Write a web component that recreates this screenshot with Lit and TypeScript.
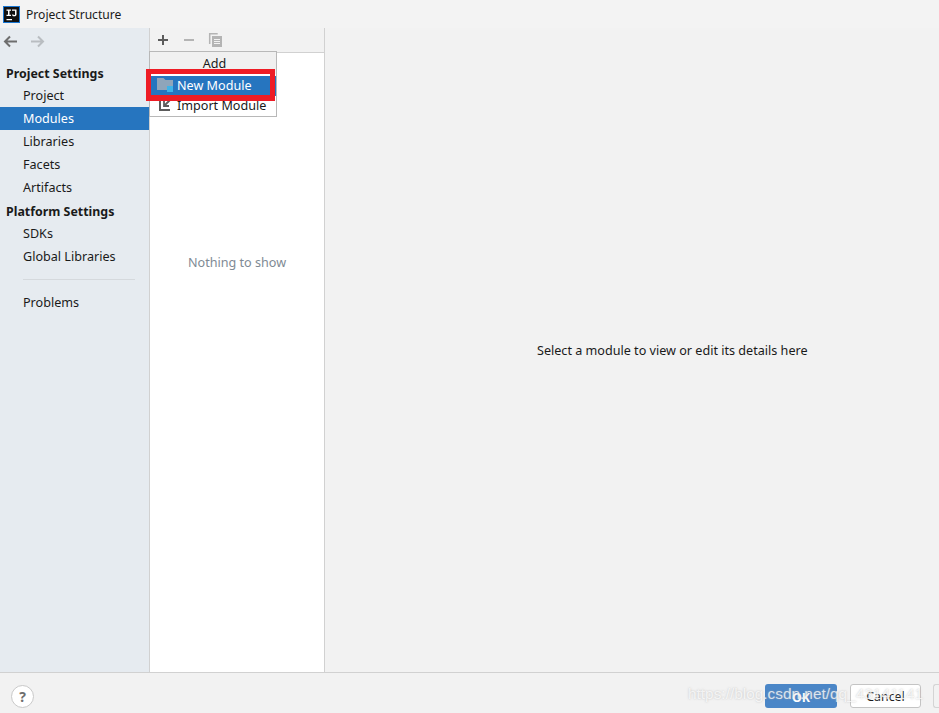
import { LitElement, html, css } from "lit";
import { customElement } from "lit/decorators.js";

@customElement("app-root")
export class AppRoot extends LitElement {
  static styles = css`
    :host {
      display: flex;
      flex-direction: column;
      position: relative;
      width: 939px;
      height: 713px;
      overflow: hidden;
      background: #f2f2f2;
      color: #1a1a1a;
      font-family: "Noto Sans", "Open Sans", sans-serif;
      font-size: 12.6px;
    }
    .title {
      height: 28px;
      flex: none;
      display: flex;
      align-items: center;
      gap: 6px;
      padding-left: 3px;
      background: #f3f3f3;
      font-size: 12.1px;
    }
    .logo { width: 17px; height: 17px; display: block; }
    .main { flex: 1; display: flex; min-height: 0; }
    .side {
      width: 149px;
      flex: none;
      background: #e6ebf0;
      display: flex;
      flex-direction: column;
    }
    .nav-arrows {
      height: 27px;
      display: flex;
      align-items: center;
      gap: 10px;
      padding-left: 2px;
    }
    .nav-arrows svg { width: 17px; height: 17px; display: block; }
    .group { height: 23px; line-height: 25px; padding-left: 6px; font-weight: 700; font-size: 12.4px; }
    .first { margin-top: 6px; }
    .item { height: 23px; line-height: 23px; padding-left: 23px; }
    .item.sel { background: #2675bf; color: #fff; }
    .sep { height: 1px; background: #d5d9dd; margin: 11px 14px 11px 23px; }
    .mid {
      width: 176px;
      flex: none;
      box-sizing: border-box;
      border-left: 1px solid #d1d1d1;
      border-right: 1px solid #d1d1d1;
      display: flex;
      flex-direction: column;
    }
    .tools {
      height: 25px;
      flex: none;
      box-sizing: border-box;
      display: flex;
      align-items: center;
      gap: 10px;
      padding-left: 5px;
      border-bottom: 1px solid #d1d1d1;
    }
    .tools svg { width: 16px; height: 16px; display: block; }
    .list {
      flex: 1;
      background: #fff;
      display: flex;
      justify-content: center;
      padding-top: 201px;
      color: #808a94;
    }
    .detail {
      flex: 1;
      box-sizing: border-box;
      padding: 314px 0 0 212px;
    }
    .foot {
      height: 41px;
      flex: none;
      box-sizing: border-box;
      border-top: 1px solid #d1d1d1;
      display: flex;
      align-items: center;
      padding: 6px 0 0 11px;
    }
    .help {
      width: 23px;
      height: 23px;
      box-sizing: border-box;
      border-radius: 50%;
      border: 1px solid #c9c9c9;
      background: #fff;
      color: #6e6e6e;
      font-weight: 700;
      font-size: 14px;
      display: flex;
      align-items: center;
      justify-content: center;
    }
    .spacer { flex: 1; }
    .btn {
      height: 24px;
      box-sizing: border-box;
      border-radius: 3px;
      display: flex;
      align-items: center;
      justify-content: center;
      font-size: 12.4px;
    }
    .ok { width: 72px; background: #4a86c7; color: #fff; font-weight: 700; margin-right: 13px; padding-top: 2px; }
    .cancel { width: 71px; background: #fff; border: 1px solid #c4c4c4; margin-right: 12px; }
    .stub { width: 6px; border: 1px solid #d4d4d4; border-right: none; border-radius: 3px 0 0 3px; background: #f2f2f2; }
    .popup {
      position: absolute;
      left: 149px;
      top: 51px;
      width: 128px;
      height: 66px;
      box-sizing: border-box;
      border: 1px solid #b8b8b8;
      background: #fff;
      z-index: 2;
    }
    .popup-head { height: 22px; line-height: 23px; text-align: center; background: #f0f0f0; padding-left: 3px; }
    .row { display: flex; align-items: center; gap: 4px; padding-left: 7px; box-sizing: border-box; padding-bottom: 2px; }
    .row svg { width: 16px; height: 16px; display: block; flex: none; }
    .row.on { background: #2675bf; color: #fff; margin-top: 2px; height: 20px; }
    .row.off { height: 20px; }
    .frame {
      position: absolute;
      left: 146px;
      top: 69px;
      width: 129px;
      height: 32px;
      box-sizing: border-box;
      border: 5px solid #ee1c25;
      border-bottom-width: 6px;
      z-index: 3;
    }
    .mark {
      position: absolute;
      left: 688px;
      top: 685px;
      font-family: "Liberation Sans", sans-serif;
      font-size: 15.4px;
      color: rgba(255, 255, 255, 0.75);
      white-space: nowrap;
      text-shadow: 0 0 2px rgba(170, 170, 170, 0.7);
      z-index: 4;
    }
  `;

  render() {
    return html`
      <div class="title">
        <svg class="logo" viewBox="0 0 17 17">
          <rect x="0.5" y="0.5" width="16" height="16" fill="#111" stroke="#1976d2" />
          <path d="M3.500 3.500h4.500v1.300H6.500v4h1.500v1.300H3.500V8.800H5v-4H3.500zM9 3.500h4.500v5c0 1.200-.8 1.800-2.300 1.800S9 9.700 9 8.500h1.500c0 .4.200.6.700.6s.8-.2.800-.7V4.800H9zM3.500 13h5.500v1.200H3.500z" fill="#fff" />
        </svg>
        <span>Project Structure</span>
      </div>
      <div class="main">
        <aside class="side">
          <div class="nav-arrows">
            <svg viewBox="0 0 17 17" fill="none" stroke="#6e6e6e" stroke-width="2">
              <path d="M15 8.500H3M8 3.500l-5 5 5 5" />
            </svg>
            <svg viewBox="0 0 17 17" fill="none" stroke="#b9bdc1" stroke-width="2">
              <path d="M2 8.500h12M9 3.500l5 5-5 5" />
            </svg>
          </div>
          <div class="group first">Project Settings</div>
          <div class="item">Project</div>
          <div class="item sel">Modules</div>
          <div class="item">Libraries</div>
          <div class="item">Facets</div>
          <div class="item">Artifacts</div>
          <div class="group">Platform Settings</div>
          <div class="item">SDKs</div>
          <div class="item">Global Libraries</div>
          <div class="sep"></div>
          <div class="item">Problems</div>
        </aside>
        <section class="mid">
          <div class="tools">
            <svg viewBox="0 0 16 16" fill="none" stroke="#5c5c5c" stroke-width="2"><path d="M8 3v10M3 8h10" /></svg>
            <svg viewBox="0 0 16 16" fill="none" stroke="#b4b4b4" stroke-width="2"><path d="M3 8h10" /></svg>
            <svg viewBox="0 0 16 16" fill="none" stroke="#b4b4b4" stroke-width="1.500">
              <path d="M2.700 12V1.800h8" />
              <rect x="5" y="4" width="10" height="11" fill="#b4b4b4" stroke="none" />
              <path d="M7 7.500h6M7 9.500h6M7 11.500h6" stroke="#f2f2f2" stroke-width="1" />
            </svg>
          </div>
          <div class="list"><span>Nothing to show</span></div>
        </section>
        <section class="detail">
          <span>Select a module to view or edit its details here</span>
        </section>
      </div>
      <footer class="foot">
        <div class="help">?</div>
        <div class="spacer"></div>
        <div class="btn ok">OK</div>
        <div class="btn cancel">Cancel</div>
        <div class="btn stub"></div>
      </footer>
      <div class="popup">
        <div class="popup-head">Add</div>
        <div class="row on">
          <svg viewBox="0 0 16 16">
            <path d="M0 1h6.500l2 2H16v10H0z" fill="#8fa5ba" />
            <rect x="10" y="9" width="6" height="6" fill="#3fb3e8" />
          </svg>
          <span>New Module</span>
        </div>
        <div class="row off">
          <svg viewBox="0 0 16 16" fill="none" stroke="#5c5c5c" stroke-width="2">
            <path d="M3 2v11h10" />
            <path d="M13 3L8 8M7 4v5h5" stroke-width="1.800" />
          </svg>
          <span>Import Module</span>
        </div>
      </div>
      <div class="frame"></div>
      <div class="mark">https://blog.csdn.net/qq_43141141</div>
    `;
  }
}
